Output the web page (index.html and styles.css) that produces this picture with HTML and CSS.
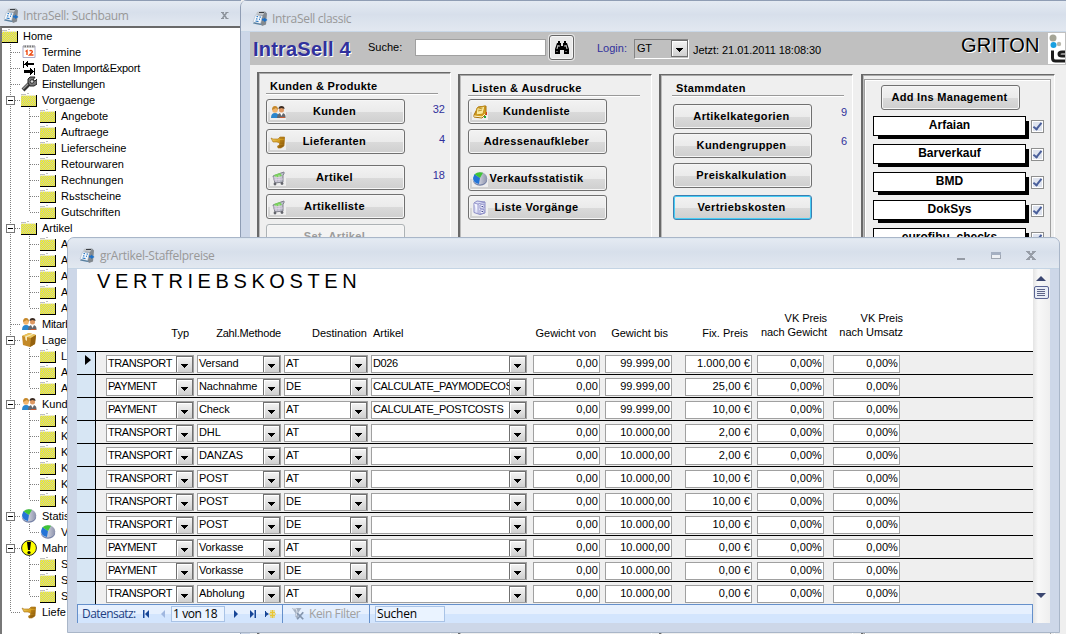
FILE: index.html
```html
<!DOCTYPE html>
<html lang="de">
<head>
<meta charset="utf-8">
<title>IntraSell classic</title>
<link rel="stylesheet" href="styles.css">
</head>
<body>
<svg class="defs" aria-hidden="true">
  <defs>
    <linearGradient id="gold" x2="1" y2="1"><stop offset="0" stop-color="#f8dc70"/><stop offset=".5" stop-color="#d39a1c"/><stop offset="1" stop-color="#7c4e08"/></linearGradient>
    <linearGradient id="steel" x2="1"><stop offset="0" stop-color="#fff"/><stop offset="1" stop-color="#8c92ac"/></linearGradient>
    <pattern id="dither" width="2" height="2" patternUnits="userSpaceOnUse"><rect width="2" height="2" fill="#ff0"/><path d="M0 0h1v1H0zM1 1h1v1H1z" fill="#c0c0c0"/></pattern>
  </defs>
  <symbol id="app" viewBox="0 0 16 16"><path d="M5 1l8-.5 2 2-1 11-4 1.500L8 12z" fill="#83898f"/><path d="M5 1l8-.5L11 4 4 3.500z" fill="#c3c7cb"/><path d="M7 1.500h5" stroke="#3a3e44"/><path d="M3.500 4l7 .7-2 8.300-7.500-2z" fill="#f2f6fa" stroke="#a5b3c2" stroke-width=".5"/><path d="M4.500 5.500l1.500.2M7.500 6l1.500.2M4 7.800l1.500.2M7 8.200l1 .1M3.500 10l3 .6" stroke="#2e7bc6" stroke-width="1.200"/><path d="M10 7.500l2 .3V6.500L15.500 9 12 11V9.700l-2-.3z" fill="#1c70c8"/><path d="M1 12.500l7.500 1.500 1.500-1-8-1.800z" fill="#587f9f"/></symbol>
  <symbol id="folder" viewBox="0 0 16 16" shape-rendering="crispEdges"><path d="M0 3h16v12H0z" fill="#000"/><path d="M0 3h15v11H0z" fill="url(#dither)"/><path d="M0 2h5v1H0zM6 1h2v1H6z" fill="#c0c0c0"/><path d="M0 3h15v1H0z" fill="#eeeecb"/></symbol>
  <symbol id="calendar" viewBox="0 0 16 16"><path d="M2 2h12v11.500H2z" fill="#fff" stroke="#acaac8"/><path d="M2 1.500h12v2H2z" fill="#777"/><path d="M3 1v3M5.500 1v3M8 1v3M10.500 1v3M13 1v3" stroke="#ddd"/><path d="M4.500 7.500l1.500-1V11M8.500 7c2-1.500 4 .5 2 2l-2 2h4" fill="none" stroke="#ee4b14" stroke-width="1.400"/></symbol>
  <symbol id="arrows" viewBox="0 0 16 16" shape-rendering="crispEdges"><path d="M2 1h1v7H2zM3 4h1V3h1V2h1V1h1v2h6v2H7v2H6V6H5V5H3zM13 8h1v7h-1zM13 11h-1v-1h-1V9h-1V8H9v2H3v3h6v2h1v-1h1v-1h1v-1h1z"/></symbol>
  <symbol id="wrench" viewBox="0 0 16 16"><path d="M2 14l6-6" stroke="#333" stroke-width="4"/><path d="M2 13l6-6" stroke="#999" stroke-width="1.500"/><path d="M9 1h5l-2 3 2 1 2-2v5l-3 2H9L7 7V3z" fill="#777" stroke="#222"/><circle cx="11" cy="5.500" r="1.800" fill="#ddd" stroke="#333"/></symbol>
  <symbol id="people" viewBox="0 0 16 16"><path d="M1 14q0-5 4-5t4 5z" fill="#2b86cd"/><path d="M7 14q0-5 4.500-5t4 5z" fill="#66686e"/><path d="M10 9l1.500 3L13 9z" fill="#fff"/><circle cx="5" cy="6" r="2.800" fill="#f1b46c"/><circle cx="11.500" cy="6" r="2.500" fill="#df9862"/><path d="M2 6q0-4 3-4t3 4L6 4z" fill="#c4872a"/><path d="M8.500 5q0-3 3-3t3 3l-3-1z" fill="#3c2c22"/><path d="M10 13h5v1h-5z" fill="#c85b36"/></symbol>
  <symbol id="box" viewBox="0 0 16 16"><path d="M1 4l7-3 7 2-1 9-5 3-7-2z" fill="#c48a28"/><path d="M1 4l7-3 7 2-5 3z" fill="#ebc55c"/><path d="M10 6l5-3-1 9-5 3z" fill="#95620f"/><path d="M4 4.500L11 2l1 .5L6 5v4L4.500 8z" fill="#f7ebc0"/></symbol>
  <symbol id="pie" viewBox="0 0 16 16"><ellipse cx="8" cy="9" rx="7.200" ry="5.800" fill="#737fa4"/><ellipse cx="8" cy="7.300" rx="7.200" ry="6.200" fill="url(#steel)"/><path d="M8 7l-1 6Q1 12 1 7l1.500-4z" fill="#2474d6"/><path d="M8 7L2.500 3.200Q6 .2 11 1.700z" fill="#3fc437"/></symbol>
  <symbol id="warn" viewBox="0 0 16 16"><circle cx="8" cy="8" r="7.400" fill="#ff0" stroke="#222"/><path d="M6 2h4l-1 8H7z"/><circle cx="8" cy="12.500" r="1.600"/></symbol>
  <symbol id="tap" viewBox="0 0 16 16"><path d="M1 4l2 1h5l2-2h4.500v3L14 12l-3 2H8l-.5-2 2-1V9L7 8H3L2 6z" fill="url(#gold)" stroke="#a87012" stroke-width=".6"/><path d="M9.500 4h5M10 7h4M10 9h4M9 12h4" stroke="#8a560a" stroke-width=".8"/></symbol>
  <symbol id="cart" viewBox="0 0 16 16"><path d="M3 6l8-3 3-1v2l-1 1v7l-8 1z" fill="#b9bdc7" stroke="#82838f"/><path d="M4 5l6-2 2 3-6 2z" fill="#79d35b"/><path d="M3 8l9-1M4 10l9-1M6 6v6M9 5v7" stroke="#e9d6ef" stroke-width=".7"/><circle cx="5" cy="14" r="1.400" fill="#63656c"/><circle cx="12" cy="13.500" r="1.400" fill="#63656c"/></symbol>
  <symbol id="book" viewBox="0 0 16 16"><path d="M2 11l4-8 8-1v8l-4 4-8-1z" fill="#d9a21d" stroke="#a66f09"/><path d="M5 4l8-2-2 8-7 1z" fill="#fae99c" stroke="#c18d19"/><path d="M6.500 5l4-1M6 7l4-1" stroke="#bd952e"/><path d="M2 12l8 1 3-3" fill="none" stroke="#fff6cf"/><path d="M14.500 8v3" stroke="#d73b22"/><path d="M13 12v2" stroke="#25a53b" stroke-width="2"/></symbol>
  <symbol id="cabinet" viewBox="0 0 16 16"><path d="M2 3l3-2 8 1v11l-5 1.500-6-2z" fill="#dfe1f7" stroke="#8c8dc6"/><path d="M2 3l4 1v10M6 4l7-2M8 5l4-1v4l-4 .5zM8 10l4-.5V13l-4 1z" fill="#f5f5ff" stroke="#8686c2" stroke-width=".8"/><path d="M9.500 6.500H11M9.500 11.500H11" stroke="#444c8f"/></symbol>
  <symbol id="binoculars" viewBox="0 0 16 16"><path d="M4 1h2v2h1v3h2V3h1V1h2v2h1l2 6v5h-5v-4H6v4H1V9l2-6h1z"/><path d="M4 5l-1 4M5 5v2M12 5l1 4M11 5v2M3 11v1M12 11v1" stroke="#fff" stroke-width=".8"/></symbol>
  <symbol id="funnel" viewBox="0 0 16 16"><path d="M1 1h11L8 7v7l-3-3V7z" fill="#a6b2c3"/><path d="M2 2h4l1 4-1 4" fill="none" stroke="#e8edf4"/><path d="M7 7l7 7M14 6l-7 8" stroke="#8495ad" stroke-width="2"/></symbol>
</svg>

<section class="window tree-window">
  <header class="titlebar"><svg class="ico"><use href="#app"/></svg><span class="caption c1">IntraSell: Suchbaum</span><svg class="close-small" viewBox="0 0 8 8"><path d="M1.500 1l4 5M5.500 1l-4 5" stroke="#8c929b" stroke-width="1.500"/><path d="M0 .5h3M4.500 .5h3M0 6.500h3M4.500 6.500h3" stroke="#8c929b"/></svg></header>
  <div class="tree">
    <div class="node root"><svg class="ico"><use href="#folder"/></svg>Home</div>
    <div class="branches">
      <div class="node"><svg class="ico"><use href="#calendar"/></svg>Termine</div>
      <div class="node tight"><svg class="ico"><use href="#arrows"/></svg>Daten Import&amp;Export</div>
      <div class="node tight"><svg class="ico"><use href="#wrench"/></svg>Einstellungen</div>
      <div class="node open"><svg class="ico"><use href="#folder"/></svg>Vorgaenge</div>
      <div class="sub">
        <div class="node"><svg class="ico"><use href="#folder"/></svg>Angebote</div>
        <div class="node"><svg class="ico"><use href="#folder"/></svg>Auftraege</div>
        <div class="node"><svg class="ico"><use href="#folder"/></svg>Lieferscheine</div>
        <div class="node"><svg class="ico"><use href="#folder"/></svg>Retourwaren</div>
        <div class="node"><svg class="ico"><use href="#folder"/></svg>Rechnungen</div>
        <div class="node"><svg class="ico"><use href="#folder"/></svg>Rьstscheine</div>
        <div class="node"><svg class="ico"><use href="#folder"/></svg>Gutschriften</div>
      </div>
      <div class="node open"><svg class="ico"><use href="#folder"/></svg>Artikel</div>
      <div class="sub">
        <div class="node"><svg class="ico"><use href="#folder"/></svg>A</div>
        <div class="node"><svg class="ico"><use href="#folder"/></svg>A</div>
        <div class="node"><svg class="ico"><use href="#folder"/></svg>A</div>
        <div class="node"><svg class="ico"><use href="#folder"/></svg>A</div>
        <div class="node"><svg class="ico"><use href="#folder"/></svg>A</div>
      </div>
      <div class="node tight"><svg class="ico"><use href="#people"/></svg>Mitarb</div>
      <div class="node open"><svg class="ico"><use href="#box"/></svg>Lager</div>
      <div class="sub">
        <div class="node"><svg class="ico"><use href="#folder"/></svg>L</div>
        <div class="node"><svg class="ico"><use href="#folder"/></svg>A</div>
        <div class="node"><svg class="ico"><use href="#folder"/></svg>A</div>
      </div>
      <div class="node open"><svg class="ico"><use href="#people"/></svg>Kund</div>
      <div class="sub">
        <div class="node"><svg class="ico"><use href="#folder"/></svg>K</div>
        <div class="node"><svg class="ico"><use href="#folder"/></svg>K</div>
        <div class="node"><svg class="ico"><use href="#folder"/></svg>K</div>
        <div class="node"><svg class="ico"><use href="#folder"/></svg>K</div>
        <div class="node"><svg class="ico"><use href="#folder"/></svg>K</div>
        <div class="node"><svg class="ico"><use href="#folder"/></svg>K</div>
      </div>
      <div class="node open"><svg class="ico"><use href="#pie"/></svg>Statis</div>
      <div class="sub"><div class="node"><svg class="ico"><use href="#pie"/></svg>V</div></div>
      <div class="node open"><svg class="ico"><use href="#warn"/></svg>Mahn</div>
      <div class="sub">
        <div class="node"><svg class="ico"><use href="#folder"/></svg>S</div>
        <div class="node"><svg class="ico"><use href="#folder"/></svg>S</div>
        <div class="node"><svg class="ico"><use href="#folder"/></svg>S</div>
      </div>
      <div class="node"><svg class="ico"><use href="#tap"/></svg>Liefe</div>
    </div>
  </div>
</section>

<section class="window main-window">
  <header class="titlebar"><svg class="ico"><use href="#app"/></svg><span class="caption c2">IntraSell classic</span></header>
  <div class="main-body">
    <div class="toolbar">
      <h1 class="brand">IntraSell 4</h1>
      <span class="search-label">Suche:</span>
      <div class="search"></div>
      <div class="find"><svg><use href="#binoculars"/></svg></div>
      <span class="login-label">Login:</span>
      <div class="login">GT</div>
      <span class="now">Jetzt: 21.01.2011 18:08:30</span>
      <span class="company">GRITON</span>
      <div class="logo"><svg viewBox="0 0 17 31"><circle cx="5" cy="5" r="3.500" fill="#a5a596"/><circle cx="5.500" cy="12" r="3" fill="#189fe0"/><circle cx="11" cy="11" r="2.200" fill="#b8b8ac"/><path d="M4.500 17.500V25q0 3 3 3H17M17 19h-3q-3 0-3 2t3 2h3" fill="none" stroke="#1c1c1c" stroke-width="3"/></svg></div>
    </div>
    <div class="panels">
      <section class="panel first">
        <h2>Kunden &amp; Produkte</h2>
        <div class="line"><div class="btn"><svg class="ico"><use href="#people"/></svg>Kunden</div><span class="count">32</span></div>
        <div class="line g5"><div class="btn"><svg class="ico"><use href="#tap"/></svg>Lieferanten</div><span class="count">4</span></div>
        <div class="line g11"><div class="btn"><svg class="ico"><use href="#cart"/></svg>Artikel</div><span class="count">18</span></div>
        <div class="line g4"><div class="btn"><svg class="ico"><use href="#cart"/></svg>Artikelliste</div></div>
        <div class="line g5"><div class="btn disabled">Set&nbsp; Artikel</div></div>
      </section>
      <section class="panel lists">
        <h2>Listen &amp; Ausdrucke</h2>
        <div class="line"><div class="btn"><svg class="ico"><use href="#book"/></svg>Kundenliste</div></div>
        <div class="line g5"><div class="btn">Adressenaufkleber</div></div>
        <div class="line g12"><div class="btn"><svg class="ico"><use href="#pie"/></svg>Verkaufsstatistik</div></div>
        <div class="line g4"><div class="btn"><svg class="ico"><use href="#cabinet"/></svg>Liste Vorgänge</div></div>
      </section>
      <section class="panel master">
        <h2>Stammdaten</h2>
        <div class="line"><div class="btn">Artikelkategorien</div><span class="count">9</span></div>
        <div class="line g4"><div class="btn">Kundengruppen</div><span class="count">6</span></div>
        <div class="line g5"><div class="btn">Preiskalkulation</div></div>
        <div class="line g7"><div class="btn focus">Vertriebskosten</div></div>
      </section>
      <section class="panel addins">
        <div class="addin-list">
          <div class="btn">Add Ins Management</div>
          <div class="addin"><span>Arfaian</span><i></i></div>
          <div class="addin"><span>Barverkauf</span><i></i></div>
          <div class="addin"><span>BMD</span><i></i></div>
          <div class="addin"><span>DokSys</span><i></i></div>
          <div class="addin"><span>eurofibu_checks</span><i></i></div>
        </div>
      </section>
    </div>
  </div>
</section>

<section class="window popup">
  <header class="titlebar"><svg class="ico"><use href="#app"/></svg><span class="caption c3">grArtikel-Staffelpreise</span>
    <svg class="controls" viewBox="0 0 80 12" shape-rendering="crispEdges"><path d="M0 8h8v2H0z" fill="#959ba5"/><path d="M34.500 2.500h9v6h-9z" fill="#eef1f5" stroke="#a0a7b2"/><path d="M34 2h10v3H34z" fill="#a5b0c2"/><path d="M71 2l6 7M77 2l-6 7" stroke="#989ea8" stroke-width="2"/><path d="M69 1.500h4M75 1.500h4M69 9.500h4M75 9.500h4" stroke="#989ea8"/></svg>
  </header>
  <div class="popup-content">
    <div class="form">
      <div class="form-head">
        <h2>VERTRIEBSKOSTEN</h2>
        <div class="cols labels">
          <span class="l-typ">Typ</span><span class="l-zm">Zahl.Methode</span><span class="l-dest">Destination</span><span class="l-art">Artikel</span><span class="l-num">Gewicht von</span><span class="l-num">Gewicht bis</span><span class="l-num">Fix. Preis</span><span class="two">VK Preis<br>nach Gewicht</span><span class="two">VK Preis<br>nach Umsatz</span>
        </div>
      </div>
      <div class="rows">
        <div class="rec current"><div class="cols"><b>TRANSPORT</b><b>Versand</b><b>AT</b><b>D026</b><i>0,00</i><i>99.999,00</i><i>1.000,00 €</i><i>0,00%</i><i>0,00%</i></div></div>
        <div class="rec"><div class="cols"><b>PAYMENT</b><b>Nachnahme</b><b>DE</b><b>CALCULATE_PAYMODECOS</b><i>0,00</i><i>99.999,00</i><i>25,00 €</i><i>0,00%</i><i>0,00%</i></div></div>
        <div class="rec"><div class="cols"><b>PAYMENT</b><b>Check</b><b>AT</b><b>CALCULATE_POSTCOSTS</b><i>0,00</i><i>99.999,00</i><i>10,00 €</i><i>0,00%</i><i>0,00%</i></div></div>
        <div class="rec"><div class="cols"><b>TRANSPORT</b><b>DHL</b><b>AT</b><b></b><i>0,00</i><i>10.000,00</i><i>2,00 €</i><i>0,00%</i><i>0,00%</i></div></div>
        <div class="rec"><div class="cols"><b>TRANSPORT</b><b>DANZAS</b><b>AT</b><b></b><i>0,00</i><i>10.000,00</i><i>2,00 €</i><i>0,00%</i><i>0,00%</i></div></div>
        <div class="rec"><div class="cols"><b>TRANSPORT</b><b>POST</b><b>AT</b><b></b><i>0,00</i><i>10.000,00</i><i>10,00 €</i><i>0,00%</i><i>0,00%</i></div></div>
        <div class="rec"><div class="cols"><b>TRANSPORT</b><b>POST</b><b>DE</b><b></b><i>0,00</i><i>10.000,00</i><i>10,00 €</i><i>0,00%</i><i>0,00%</i></div></div>
        <div class="rec"><div class="cols"><b>TRANSPORT</b><b>POST</b><b>DE</b><b></b><i>0,00</i><i>10.000,00</i><i>10,00 €</i><i>0,00%</i><i>0,00%</i></div></div>
        <div class="rec"><div class="cols"><b>PAYMENT</b><b>Vorkasse</b><b>AT</b><b></b><i>0,00</i><i>10.000,00</i><i>0,00 €</i><i>0,00%</i><i>0,00%</i></div></div>
        <div class="rec"><div class="cols"><b>PAYMENT</b><b>Vorkasse</b><b>DE</b><b></b><i>0,00</i><i>10.000,00</i><i>0,00 €</i><i>0,00%</i><i>0,00%</i></div></div>
        <div class="rec"><div class="cols"><b>TRANSPORT</b><b>Abholung</b><b>AT</b><b></b><i>0,00</i><i>10.000,00</i><i>0,00 €</i><i>0,00%</i><i>0,00%</i></div></div>
      </div>
      <footer class="nav">
        <span class="nav-label">Datensatz:</span>
        <svg class="nav-first" viewBox="0 0 8 8"><path d="M1 0h1.500v8H1zM7 0v8L3 4z" fill="#164596"/></svg>
        <svg class="nav-prev" viewBox="0 0 8 8"><path d="M6 0v8L2 4z" fill="#a0b7df"/></svg>
        <span class="pos">1 von 18</span>
        <svg class="nav-next" viewBox="0 0 8 8"><path d="M2 0v8l4-4z" fill="#164596"/></svg>
        <svg class="nav-last" viewBox="0 0 8 8"><path d="M5.500 0h1.500v8H5.500zM1 0v8l4-4z" fill="#164596"/></svg>
        <svg class="nav-new" viewBox="0 0 11 8"><path d="M0 1h1v6H0zM1 2v4l3-2z" fill="#164596"/><path d="M5 1h2M8 1h2M5 7h2M8 7h2M4 4h7M7.500 0v8M5 2.500h5M5 5.500h5" stroke="#e9c632"/></svg>
        <span class="filter"><svg><use href="#funnel"/></svg>Kein Filter</span>
        <span class="find-box">Suchen</span>
      </footer>
    </div>
    <div class="scroll">
      <svg viewBox="0 0 10 5"><path d="M0 5l5-5 5 5z" fill="#3b4670"/></svg>
      <div class="thumb"></div>
      <svg class="down" viewBox="0 0 10 5"><path d="M0 0l5 5 5-5z" fill="#3b4670"/></svg>
    </div>
  </div>
</section>
</body>
</html>
```

FILE: styles.css
```css
*, *::before, *::after { box-sizing: border-box; }
body {
  position: relative;
  width: 1066px;
  height: 634px;
  margin: 0;
  overflow: hidden;
  background: #efefef;
  color: #000;
  font: 11px/16px "Liberation Sans", Arial, sans-serif;
}
h1, h2 { margin: 0; }
.defs { position: absolute; width: 0; height: 0; }
.ico { width: 16px; height: 16px; flex: none; }

/* Windows on the desktop */
.window { position: absolute; overflow: hidden; }
.titlebar {
  display: flex;
  align-items: center;
  background: linear-gradient(#e4eaf2, #d7dfeb 45%, #e2e8f0);
  border-top: 1px solid #8f9db4;
}
.caption {
  margin-left: 4px;
  color: #989898;
  font: 12px/16px "Open Sans", "Noto Sans", sans-serif;
  letter-spacing: -.32px;
  white-space: nowrap;
}

/* Navigation tree */
.tree-window { left: 0; top: 0; width: 241px; height: 634px; }
.tree-window .titlebar { height: 26px; padding: 4px 12px 0 3px; }
.close-small { width: 8px; height: 8px; margin-left: auto; }
.tree {
  height: 608px;
  background: #fff;
  border-left: 2px solid #777;
  border-top: 2px solid #696969;
}
.node {
  position: relative;
  display: flex;
  align-items: center;
  gap: 5px;
  height: 16px;
  padding-left: 19px;
  white-space: nowrap;
  background: repeating-linear-gradient(90deg, #808080 0 1px, transparent 1px 2px) 9px 8px / 10px 1px no-repeat;
}
.node.root { padding-left: 0; background: none; }
.node.tight { letter-spacing: -.25px; }
.branches, .sub { position: relative; }
.branches::before, .sub::before {
  content: "";
  position: absolute;
  left: 8px;
  top: 0;
  bottom: 8px;
  width: 1px;
  background: repeating-linear-gradient(#808080 0 1px, transparent 1px 2px);
}
.sub::before { left: 27px; }
.sub .node { padding-left: 38px; background-position: 28px 8px; }
.open::before {
  content: "";
  position: absolute;
  left: 4px;
  top: 4px;
  width: 9px;
  height: 9px;
  border: 1px solid #777;
  background: linear-gradient(#000, #000) center / 5px 1px no-repeat #fff;
}

/* Main window */
.main-window { left: 240px; top: 0; width: 826px; height: 634px; border-left: 1px solid #8f9db4; border-radius: 7px 0 0 0; background: #cdd7e8; }
.main-window .titlebar { height: 32px; padding: 5px 0 0 11px; border-bottom: 1px solid #c9d8e8; }
.main-body { height: 602px; margin-left: 9px; background: #efefef; }
.toolbar { display: flex; height: 33px; background: #c0c0c0; }
.brand {
  width: 118px;
  padding: 5px 0 0 3px;
  color: #31319c;
  font-size: 20px;
  line-height: 24px;
  letter-spacing: .2px;
  white-space: nowrap;
  text-shadow: 1px 1px #fff;
}
.search-label { width: 47px; padding-top: 7px; }
.search { width: 131px; height: 17px; margin-top: 7px; background: #fff; border: 1px solid #a0a0a0; }
.find { display: grid; place-items: center; width: 25px; height: 25px; margin: 3px 0 0 3px; background: #e9e9e9; border: 1px solid #666; border-radius: 3px; box-shadow: 0 0 0 1px #e4e4e4, inset 0 0 0 1px #f6f6f6; }
.find svg { width: 16px; height: 16px; }
.login-label { width: 37px; margin-left: 23px; padding-top: 8px; color: #31319c; }
.login { position: relative; width: 55px; height: 20px; margin-top: 7px; padding-left: 2px; border: 1px solid #848484; border-right-color: #fff; border-bottom-color: #fff; letter-spacing: -.3px; }
.login::after, .cols b::after {
  content: "";
  position: absolute;
  right: 0;
  top: 0;
  width: 17px;
  height: 17px;
  border: 1px solid #707070;
  background: linear-gradient(#000, #000) 4px 7px / 7px 1px no-repeat,
    linear-gradient(#000, #000) 5px 8px / 5px 1px no-repeat,
    linear-gradient(#000, #000) 6px 9px / 3px 1px no-repeat,
    linear-gradient(#000, #000) 7px 10px / 1px 1px no-repeat,
    linear-gradient(#f4f4f4, #d0d0d0);
  box-shadow: inset 1px 1px #fff;
}
.now { width: 270px; margin-left: 4px; padding-top: 10px; letter-spacing: -.05px; white-space: nowrap; }
.company { width: 80px; margin-left: -2px; font-size: 20px; line-height: 26px; letter-spacing: .2px; text-shadow: 1px 1px #fff; }
.logo { width: 17px; height: 31px; margin: 1px 0 0 7px; background: #fff; }
.logo svg { display: block; width: 17px; height: 31px; }

.panels { display: flex; gap: 7px; height: 569px; padding: 7px 0 0 7px; }
.panel {
  flex: none;
  width: 194px;
  height: 575px;
  margin-top: 2px;
  padding-left: 8px;
  border-top: 1px solid #696969;
  border-left: 2px solid #696969;
  border-right: 1px solid #fff;
  box-shadow: inset 0 1px #a9a9a9, inset 1px 0 #bbb;
}
.panel.first { margin-top: 0; padding-left: 7px; }
.panel.master { padding-left: 12px; }
.panel h2 {
  width: 172px;
  height: 21px;
  margin-bottom: 5px;
  padding: 5px 0 0 4px;
  border-bottom: 1px solid #999;
  box-shadow: 0 1px #fff;
  font-size: 11px;
  line-height: 16px;
  letter-spacing: .38px;
  white-space: nowrap;
}
.panel.first h2 { letter-spacing: .28px; }
.panel.lists h2 { margin-bottom: 3px; }
.panel.master h2 { margin: 0 0 8px -1px; }
.line { display: flex; }
.g4 { margin-top: 4px; }
.g5 { margin-top: 5px; }
.g7 { margin-top: 7px; }
.g11 { margin-top: 11px; }
.g12 { margin-top: 12px; }
.btn {
  position: relative;
  width: 139px;
  height: 25px;
  padding-right: 2px;
  border: 1px solid #707070;
  border-radius: 3px;
  background: linear-gradient(#f2f2f2, #ebebeb 50%, #dadada 52%, #cfcfcf);
  box-shadow: inset 0 0 0 1px #f6f6f6;
  font-weight: bold;
  line-height: 23px;
  letter-spacing: .38px;
  text-align: center;
  white-space: nowrap;
}
.btn .ico { position: absolute; left: 3px; top: 4px; background: #eee; }
.btn.disabled { border-color: #adb2b5; background: #f3f3f3; color: #9c9c9c; }
.btn.focus { border-color: #3c7fb1; box-shadow: inset 0 0 0 1px #46cdf5; }
.count { flex: 1; padding: 2px 5px 0 0; color: #31319c; text-align: right; }
.master .count { padding: 0 5px 0 0; }
.panel.addins { margin-left: 1px; padding: 4px 3px 0 1px; }
.addin-list { height: 560px; padding: 5px 6px 0 8px; border: 1px solid #a0a0a0; box-shadow: inset 1px 1px #fff; }
.addin-list .btn { margin-left: 8px; margin-bottom: 6px; letter-spacing: .3px; }
.addin { display: flex; height: 28px; gap: 5px; }
.addin span { flex: none; width: 153px; height: 20px; border: 1px solid #000; background: #fff; box-shadow: 4px 4px 0 -1px #000; font-size: 12px; font-weight: bold; line-height: 17px; text-align: center; }
.addin i { position: relative; flex: none; width: 13px; height: 13px; margin-top: 4px; border: 1px solid #8e8f8f; background: #dfe4ef; box-shadow: inset 0 0 0 1px #fff; }
.addin i::after { content: ""; position: absolute; left: 3px; top: 0; width: 5px; height: 9px; border: solid #4a5f9b; border-width: 0 2px 2px 0; transform: rotate(38deg); }

/* Staggered price form */
.popup { left: 67px; top: 237px; width: 993px; height: 396px; border: 1px solid #a9b6c8; border-radius: 7px 7px 0 0; background: #cdd7e8; }
.popup .titlebar { height: 31px; padding: 5px 22px 0 11px; border-top-color: #dce6f0; border-bottom: 1px solid #c4d4e4; }
.popup .caption { margin-left: 5px; letter-spacing: -.28px; }
.controls { width: 80px; height: 12px; margin-left: auto; }
.popup-content { display: flex; width: 973px; height: 354px; margin-left: 9px; }
.form { width: 956px; background: #efefef; }
.form-head { height: 82px; background: #fff; }
.form-head h2 { height: 43px; padding: 1px 0 0 20px; font-size: 20px; font-weight: normal; line-height: 22px; letter-spacing: 4.600px; }
.cols {
  display: grid;
  grid-template-columns: 88px 84px 84px 156px 67px 67px 67px 67px 67px;
  column-gap: 3px;
  width: 795px;
}
.cols > :nth-child(5) { margin-left: 3px; margin-right: -3px; }
.cols > :nth-child(6) { margin-left: 5px; margin-right: -5px; }
.cols > :nth-child(7) { margin-left: 15px; margin-right: -15px; }
.cols > :nth-child(8) { margin-left: 17px; margin-right: -17px; }
.cols > :nth-child(9) { margin-left: 23px; margin-right: -23px; }
.labels { margin-left: 29px; text-align: right; line-height: 14px; white-space: nowrap; }
.labels span { padding-top: 14px; }
.labels .l-typ { padding-right: 5px; }
.labels .l-zm { letter-spacing: -.2px; }
.labels .l-dest { padding-right: 1px; }
.labels .l-art { padding-left: 2px; text-align: left; }
.labels .l-num { padding-right: 4px; }
.labels .two { padding-top: 0; position: relative; left: 3px; top: -1px; letter-spacing: -.05px; }
.rec {
  height: 23px;
  padding: 3px 0 0 29px;
  border-top: 1px solid #000;
  background: linear-gradient(90deg, #d7e6f4 18px, #000 18px 19px, transparent 19px);
}
.rec.current { position: relative; }
.rec.current::before { content: ""; position: absolute; left: 8px; top: 3px; border: solid transparent; border-width: 5px 0 5px 6px; border-left-color: #000; }
.rec b, .rec i {
  position: relative;
  height: 18px;
  padding-left: 1px;
  border: 1px solid #a0a0a0;
  background: #fff;
  font-style: normal;
  font-weight: normal;
  line-height: 14px;
  white-space: nowrap;
  overflow: hidden;
}
.rec b:nth-child(1), .rec b:nth-child(4) { letter-spacing: -.4px; }
.rec b:nth-child(2) { letter-spacing: -.12px; }
.rec i { padding-right: 1px; text-align: right; letter-spacing: .1px; }
.nav {
  display: flex;
  align-items: center;
  height: 19px;
  padding-left: 4px;
  border: solid #6590cb;
  border-width: 1px 1px 0 1px;
  background: linear-gradient(#e6f0fe 50%, #d3e5fd 50%);
  font: 12px/16px "Open Sans", "Noto Sans", sans-serif;
  letter-spacing: -.4px;
  white-space: nowrap;
}
.nav svg { flex: none; width: 8px; height: 8px; }
.nav-label { width: 60px; color: #1e3f82; letter-spacing: -.55px; }
.nav .nav-prev { margin-left: 9px; }
.pos { width: 54px; height: 16px; margin-left: 4px; padding-left: 1px; border: 1px solid #a9c3e6; background: #eaf3ff; line-height: 14px; }
.nav .nav-next { margin-left: 7px; }
.nav .nav-last { margin-left: 9px; }
.nav .nav-new { width: 11px; margin-left: 8px; }
.filter { display: flex; align-items: center; gap: 4px; width: 88px; height: 18px; margin-left: 6px; padding-left: 8px; border: solid #6590cb; border-width: 0 1px; color: #a0a0a0; }
.nav .filter svg { width: 14px; height: 14px; }
.find-box { width: 70px; height: 16px; margin-left: 5px; padding-left: 1px; border: 1px solid #a9c3e6; background: #eaf3ff; line-height: 14px; letter-spacing: -.2px; }
.scroll { display: flex; flex-direction: column; align-items: center; width: 17px; padding: 7px 1px 5px 0; background: linear-gradient(90deg, #e4e4e4, #f8f8f8 30%, #efefef); }
.scroll svg { width: 10px; height: 5px; }
.scroll .down { margin: auto 0 20px; }
.thumb { width: 15px; height: 13px; margin-top: 5px; border: 1px solid #5b6594; border-radius: 2px; background: repeating-linear-gradient(#5d6488 0 1px, transparent 1px 2px) center / 8px 7px no-repeat #e9edf6; }
```
